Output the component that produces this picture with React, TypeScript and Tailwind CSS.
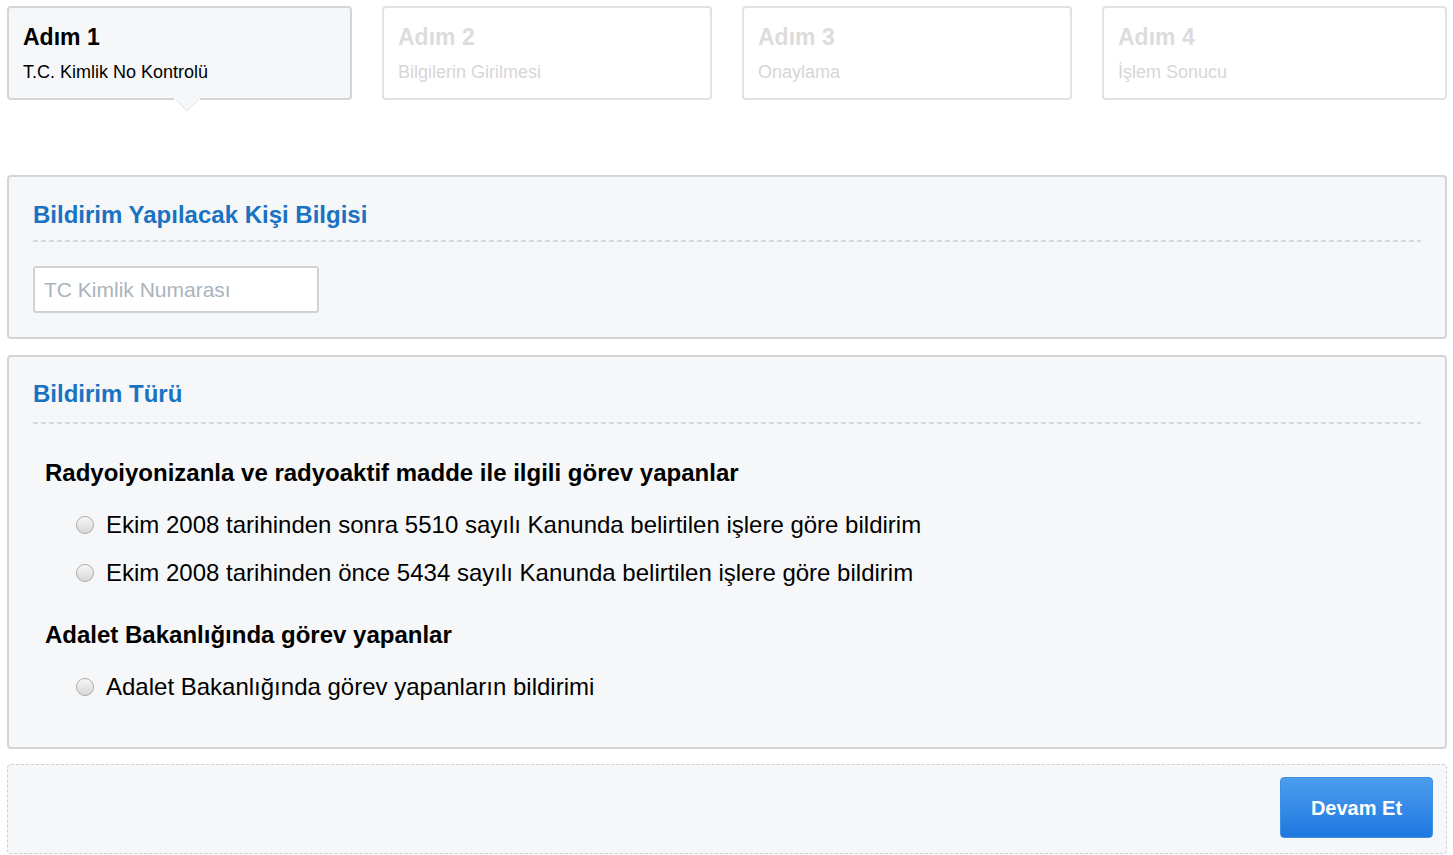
import React from 'react';

const steps = [
  { title: 'Adım 1', sub: 'T.C. Kimlik No Kontrolü', width: 'w-[345px]' },
  { title: 'Adım 2', sub: 'Bilgilerin Girilmesi', width: 'w-[330px]' },
  { title: 'Adım 3', sub: 'Onaylama', width: 'w-[330px]' },
  { title: 'Adım 4', sub: 'İşlem Sonucu', width: 'w-[345px]' },
];

function Radio({ label }: { label: string }) {
  return (
    <label className="flex items-center gap-3 pl-[43px] h-[30px] text-[24px] text-black leading-[30px] cursor-pointer">
      <span className="w-[18px] h-[18px] shrink-0 rounded-full border border-[#a9a9a9] bg-gradient-to-b from-[#f4f4f4] to-[#d9d9d9] shadow-[inset_0_1px_1px_rgba(255,255,255,0.8)]" />
      <span>{label}</span>
    </label>
  );
}

function Dashed({ className }: { className: string }) {
  return (
    <div
      className={`h-[2px] bg-[repeating-linear-gradient(90deg,#d8d9db_0_5px,transparent_5px_8px)] ${className}`}
    />
  );
}

export default function App() {
  return (
    <div className="min-h-screen bg-white pl-[7px] pr-[6px] pt-[6px] font-['Liberation_Sans',Arial,sans-serif]">
      <div className="flex gap-[30px]">
        {steps.map((s, i) => {
          const active = i === 0;
          return (
            <div
              key={s.title}
              className={`relative ${s.width} h-[94px] rounded-[4px] border-2 px-[14px] pt-[15px] ${
                active ? 'border-[#d3d5d9] bg-[#f6f7f9]' : 'border-[#e2e2e2] bg-white'
              }`}
            >
              <div className={`text-[23px] leading-[28px] font-bold ${active ? 'text-black' : 'text-[#dcdcdc]'}`}>
                {s.title}
              </div>
              <div className={`mt-[10px] text-[18px] leading-[22px] ${active ? 'text-black' : 'text-[#d6d6d6]'}`}>
                {s.sub}
              </div>
              {active && (
                <svg
                  className="absolute left-[165px] top-[90px]"
                  width="26"
                  height="15"
                  viewBox="0 0 26 15"
                >
                  <polygon points="0,0 26,0 13,13" fill="#f6f7f9" />
                  <polyline points="1,1 13,13 25,1" fill="none" stroke="#e3e4e7" strokeWidth="1" />
                  <rect x="0" y="0" width="26" height="2" fill="#f6f7f9" />
                </svg>
              )}
            </div>
          );
        })}
      </div>

      <section className="mt-[75px] rounded-[4px] border-2 border-[#d3d5d9] bg-[#f6f7f9] px-[24px] pt-[23px] pb-[24px]">
        <h2 className="text-[24px] leading-[30px] font-bold text-[#1a72c2]">Bildirim Yapılacak Kişi Bilgisi</h2>
        <Dashed className="mt-[10px]" />
        <input
          className="mt-[24px] block w-[286px] h-[47px] rounded-[3px] border-2 border-[#cfd1d4] bg-white px-[9px] text-[21px] text-black placeholder:text-[#aab4bd] outline-none"
          placeholder="TC Kimlik Numarası"
        />
      </section>

      <section className="mt-[16px] rounded-[4px] border-2 border-[#d3d5d9] bg-[#f6f7f9] px-[24px] pt-[22px] pb-[45px]">
        <h2 className="text-[24px] leading-[30px] font-bold text-[#1a72c2]">Bildirim Türü</h2>
        <Dashed className="mt-[13px]" />
        <h3 className="mt-[34px] pl-[12px] text-[24px] leading-[30px] font-bold text-black">
          Radyoiyonizanla ve radyoaktif madde ile ilgili görev yapanlar
        </h3>
        <div className="mt-[22px] flex flex-col gap-[18px]">
          <Radio label="Ekim 2008 tarihinden sonra 5510 sayılı Kanunda belirtilen işlere göre bildirim" />
          <Radio label="Ekim 2008 tarihinden önce 5434 sayılı Kanunda belirtilen işlere göre bildirim" />
        </div>
        <h3 className="mt-[32px] pl-[12px] text-[24px] leading-[30px] font-bold text-black">
          Adalet Bakanlığında görev yapanlar
        </h3>
        <div className="mt-[22px]">
          <Radio label="Adalet Bakanlığında görev yapanların bildirimi" />
        </div>
      </section>

      <div className="mt-[15px] flex h-[90px] justify-end rounded-[4px] border border-dashed border-[#cdcfd2] bg-[#f6f7f9] pt-[12px] pr-[13px]">
        <button className="h-[61px] w-[153px] rounded-[4px] border border-[#3f8fe6] bg-gradient-to-b from-[#4c9ded] to-[#1e78e0] text-[20px] font-bold text-white">
          Devam Et
        </button>
      </div>
    </div>
  );
}
